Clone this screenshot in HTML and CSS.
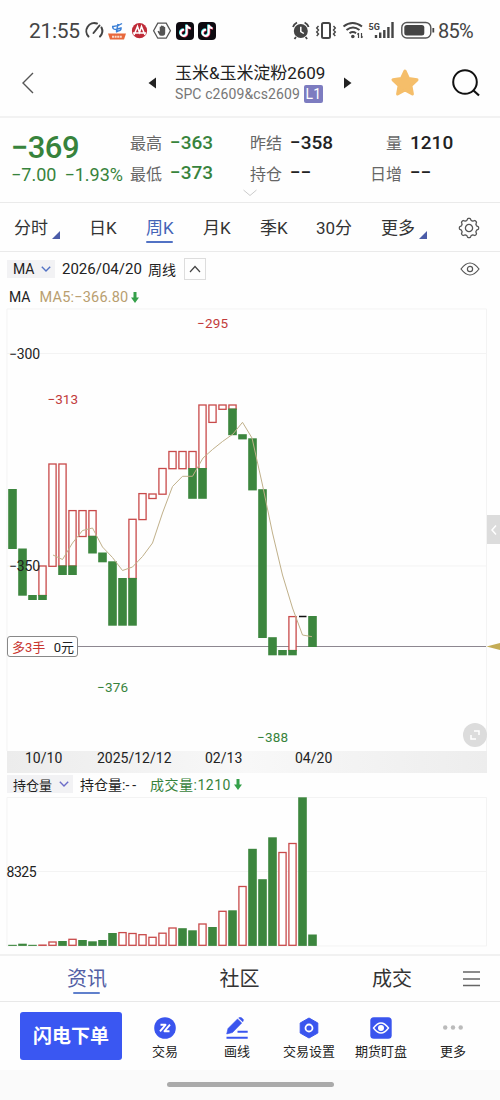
FILE: index.html
```html
<!DOCTYPE html>
<html lang="zh-CN">
  <head>
    <meta charset="utf-8">
    <title>玉米&amp;玉米淀粉2609</title>
    <link rel="stylesheet" href="styles.css">
  </head>
  <body>
    <div class="status-bar">
      <span class="clock">21:55</span>
      <svg class="status-left" width="136" height="22" viewBox="84 20 136 22">
        <g fill="none" stroke="#444" stroke-width="2" stroke-linecap="round">
          <path d="M88.500 36.500a8 8 0 0 1 8.500-13M101.500 27.500a8 8 0 0 1-1.500 9M93.500 33l6-7.500"/>
        </g>
        <path d="M108 33.500h18l-2 6h-14z" fill="#e8683c"/>
        <path d="M112 36.700h10" stroke="#fbd9ca" stroke-width="2" stroke-dasharray="2 .6"/>
        <path d="M112 26.500q5 .5 10-3M113 26q-1 3.500 3 3.500l5-1.500q.5 2.500-3 3l-2 1M118 24l-1.500 8" fill="none" stroke="#3b7fd6" stroke-width="1.500"/>
        <circle cx="139.500" cy="30.700" r="7.600" fill="#bf2b38"/>
        <path d="M134 35l3.500-8.500 2 6 2-6L145 35M133 33h13" fill="none" stroke="#fff" stroke-width="1.500"/>
        <path d="M153.600 30.700l4.200-7.500h8.400l4.200 7.500-4.200 7.500h-8.400z" fill="#fff" stroke="#555" stroke-width="1.300"/>
        <path d="M159.800 35.500l-2.300-4 1-.7 1.200 1v-5q.7-.8 1.300 0v-1q.8-.8 1.400 0v.3q.8-.8 1.400 0v1q.8-.6 1.400.2v6q0 2-2 2.500h-2z" fill="#555"/>
        <rect x="176" y="22" width="18" height="18" rx="4" fill="#0d0a10"/>
        <rect x="198" y="22" width="18" height="18" rx="4" fill="#0d0a10"/>
        <g fill="none" stroke-width="2">
          <g id="note">
            <path d="M184 29.800a3.100 3.100 0 1 0 2.700 3V25q.8 3 3.800 3.200" stroke="#31d5d8" transform="translate(-.6 -.5)"/>
            <path d="M184 29.800a3.100 3.100 0 1 0 2.700 3V25q.8 3 3.800 3.200" stroke="#e8315b" transform="translate(.6 .5)"/>
            <path d="M184 29.800a3.100 3.100 0 1 0 2.700 3V25q.8 3 3.800 3.200" stroke="#fff"/>
          </g>
          <use href="#note" x="22"/>
        </g>
      </svg>
      <svg class="status-right" width="146" height="22" viewBox="290 20 146 22">
        <circle cx="300.800" cy="31" r="7" fill="#444"/>
        <path d="M293 27q1-3 4-4.500M308.600 27q-1-3-4-4.500M296 37l-1.500 2M305.600 37l1.500 2" stroke="#444" stroke-width="1.800" fill="none"/>
        <path d="M300.800 26.800v4.700l3 2" stroke="#fff" stroke-width="1.500" fill="none"/>
        <rect x="322" y="23" width="8" height="15" rx="1.500" fill="none" stroke="#444" stroke-width="2"/>
        <path d="M318.500 26l-1.800 2 1.800 2-1.800 2 1.800 2-1.800 2M333.500 26l1.800 2-1.800 2 1.800 2-1.800 2 1.800 2" fill="none" stroke="#444" stroke-width="1.400"/>
        <path d="M343.500 26.500q9-7 18.500 0M346.500 30q6.500-5 13 0M349.500 33.200q3.300-2.400 6.600 0" fill="none" stroke="#444" stroke-width="2"/>
        <circle cx="352.800" cy="36.500" r="1.800" fill="#444"/>
        <path d="M358.500 38v-5M361.500 33v5M357.300 34.500l1.200-1.500M362.700 36.500l-1.200 1.500" stroke="#444" stroke-width="1.200"/>
        <text x="368.500" y="29.500" class="net">5G</text>
        <path d="M376 38v-3M380.200 38v-5.500M384.300 38v-8M388.400 38v-11M392.500 38V22" stroke="#444" stroke-width="2.400"/>
        <rect x="401.800" y="22.500" width="29" height="15.500" rx="5" fill="none" stroke="#555" stroke-width="1.400"/>
        <rect x="404.300" y="25" width="20" height="10.500" rx="2.500" fill="#444"/>
        <path d="M433.300 28v4.500" stroke="#444" stroke-width="1.800"/>
      </svg>
      <span class="battery">85%</span>
    </div>

    <div class="header">
      <svg class="back" width="14" height="24" viewBox="0 0 14 24"><path d="M12 2L2 12l10 10" fill="none" stroke="#555" stroke-width="1.400"/></svg>
      <svg class="prev" width="8" height="12"><path d="M8 .5v11L.5 6z" fill="#222"/></svg>
      <div class="contract">
        <div class="contract-name">玉米&amp;玉米淀粉2609</div>
        <div class="contract-code">SPC c2609&amp;cs2609<span class="level">L1</span></div>
      </div>
      <svg class="next" width="8" height="12"><path d="M0 .5v11L7.500 6z" fill="#222"/></svg>
      <svg class="star" width="30" height="30" viewBox="0 0 30 30"><path d="M15 3l3.600 7.600 8.400 1.200-6.100 5.800 1.500 8.400-7.400-4-7.400 4 1.500-8.400L3 11.800l8.400-1.200z" fill="#f5be6a" stroke="#f5be6a" stroke-width="3" stroke-linejoin="round"/></svg>
      <svg class="search" width="30" height="30" viewBox="0 0 30 30"><circle cx="14" cy="14" r="11.800" fill="none" stroke="#111" stroke-width="2"/><path d="M22.500 22.500l5.500 5" stroke="#111" stroke-width="2.200"/></svg>
    </div>

    <div class="quote">
      <div class="quote-main">
        <div class="last">−369</div>
        <div class="change"><span>−7.00</span><span>−1.93%</span></div>
      </div>
      <div class="quote-grid">
        <span class="label">最高</span><span class="value down">−363</span>
        <span class="label">昨结</span><span class="value">−358</span>
        <span class="label right">量</span><span class="value">1210</span>
        <span class="label">最低</span><span class="value down">−373</span>
        <span class="label">持仓</span><span class="value">−−</span>
        <span class="label right">日增</span><span class="value">−−</span>
      </div>
      <svg class="expand" width="14" height="8"><path d="M.5 1l6.500 5.500L13.500 1" fill="none" stroke="#ccc"/></svg>
    </div>

    <div class="periods">
      <span class="period has-more">分时</span>
      <span class="period">日K</span>
      <span class="period active">周K</span>
      <span class="period">月K</span>
      <span class="period">季K</span>
      <span class="period">30分</span>
      <span class="period has-more">更多</span>
      <svg class="gear" width="22" height="22" viewBox="-11 -11 22 22"><g fill="none" stroke="#555" stroke-width="1.300" stroke-linejoin="round"><path id="gear-path"/><circle r="3.600"/></g></svg>
    </div>

    <div class="chart-info">
      <span class="picker">MA<svg width="10" height="6"><path d="M.8.8L5 5 9.200.8" fill="none" stroke="#5272c4" stroke-width="1.400"/></svg></span>
      <span class="date">2026/04/20</span>
      <span class="kind">周线</span>
      <span class="fold"><svg width="12" height="8"><path d="M1 7l5-5.500L11 7" fill="none" stroke="#444" stroke-width="1.200"/></svg></span>
      <svg class="eye" width="20" height="14" viewBox="0 0 20 14"><path d="M1 7q9-12 18 0-9 12-18 0z" fill="none" stroke="#555" stroke-width="1.200"/><circle cx="10" cy="7" r="2.600" fill="none" stroke="#555" stroke-width="1.200"/></svg>
    </div>
    <div class="ma-info">
      <span>MA</span>
      <span class="ma-value">MA5:−366.80</span>
      <svg width="8" height="11"><path d="M2.500 0h3v5.500H8L4 11 0 5.500h2.500z" fill="#35a04a"/></svg>
    </div>

    <div class="chart">
      <svg width="500" height="443" viewBox="0 308 500 443">
        <path d="M7 309h479.500V751M7 309v442M7 353.500h479.500M7 566h479.500" class="grid"/>
        <path d="M78 646.500h408" stroke="#8d8790"/>
        <g id="candles"></g>
        <path d="M299 616.500h7.500" stroke="#111" stroke-width="1.500"/>
        <polyline class="ma-line" points="53,555 62.500,559.500 72.500,543 82.500,530.500 92.500,528 102.500,547 112.500,557.500 122.500,570.500 132.500,567 142.500,556.500 152.500,543 162.500,513 172.500,486.500 182.500,476.300 192.500,476.300 203,458 212.500,449.500 222.500,441.500 233,434 242.500,422.300 252,438 262.500,485 272.500,533 282.500,575 292.500,608 302.500,635 312,636.700"/>
        <text x="9" y="358.500" textLength="31">−300</text>
        <text x="9" y="571" textLength="31">−350</text>
        <text x="47.500" y="404" class="high" textLength="30.500">−313</text>
        <text x="197" y="328" class="high" textLength="31">−295</text>
        <text x="97" y="692" class="low" textLength="31">−376</text>
        <text x="257" y="742" class="low" textLength="31">−388</text>
        <path d="M486.500 646.500L500 643v7z" fill="#c4ac55"/>
      </svg>
      <div class="position"><span class="long">多3手</span><span>0元</span></div>
      <div class="side-tab"><svg width="6" height="12"><path d="M5 1.500L1 6l4 4.500" fill="none" stroke="#fff" stroke-width="1.500"/></svg></div>
      <div class="zoom-button"><svg width="10" height="10"><path d="M4 1h5v4M1 5v4h5" fill="none" stroke="#fff" stroke-width="1.500"/></svg></div>
    </div>

    <div class="axis">
      <span>10/10</span>
      <span>2025/12/12</span>
      <span>02/13</span>
      <span>04/20</span>
    </div>

    <div class="volume-info">
      <span class="picker">持仓量<svg width="10" height="6"><path d="M.8.8L5 5 9.200.8" fill="none" stroke="#6c6cc8" stroke-width="1.400"/></svg></span>
      <span class="open-interest">持仓量:<span class="dashes">--</span></span>
      <span class="volume down">成交量:1210</span>
      <svg width="8" height="11"><path d="M2.500 0h3v5.500H8L4 11 0 5.500h2.500z" fill="#35a04a"/></svg>
    </div>
    <svg class="volume-chart" width="500" height="157" viewBox="0 797 500 157">
      <path d="M7 797.500h479.500v148.500H7zM7 871.500h479.500" class="grid"/>
      <g id="volumes"></g>
      <text x="6.500" y="877" textLength="30">8325</text>
    </svg>

    <div class="news-tabs">
      <span class="news-tab active">资讯</span>
      <span class="news-tab">社区</span>
      <span class="news-tab">成交</span>
      <svg class="menu" width="17" height="16"><path d="M0 1h17M0 8h17M0 14.500h17" stroke="#666" stroke-width="1.300"/></svg>
    </div>

    <div class="toolbar">
      <button class="order-button">闪电下单</button>
      <div class="tool">
        <svg width="22" height="22" viewBox="0 0 22 22"><circle cx="11" cy="11" r="10.800" fill="#3a55ee"/><path d="M6.500 7.800h5L6 14.300M16 7.700l-5.500 6.500h5" fill="none" stroke="#fff" stroke-width="1.900" stroke-linejoin="round"/></svg>
        <span>交易</span>
      </div>
      <div class="tool">
        <svg width="22" height="22" viewBox="0 0 22 22"><path d="M.7 17l1.300-5.500L11.500 2l4.200 4L6.500 15.500zM12.700 1l1.500-.8q1.500 0 3.300 2.600l-.7 2z" fill="#3a55ee" stroke="#3a55ee" stroke-width=".6" stroke-linejoin="round"/><path d="M11.500 14.700h10.200M.5 20.700h21.200" stroke="#3a55ee" stroke-width="2"/></svg>
        <span>画线</span>
      </div>
      <div class="tool">
        <svg width="22" height="22" viewBox="0 0 22 22"><path d="M11 1l8.800 5v10L11 21l-8.800-5V6z" fill="#3a55ee" stroke="#3a55ee" stroke-linejoin="round"/><circle cx="11" cy="11" r="3.500" fill="none" stroke="#fff" stroke-width="1.800"/></svg>
        <span>交易设置</span>
      </div>
      <div class="tool">
        <svg width="22" height="22" viewBox="0 0 22 22"><rect x=".3" y=".3" width="21.400" height="21.400" rx="3.500" fill="#3a55ee"/><path d="M3.500 11q7.500-10 15 0-7.500 10-15 0z" fill="none" stroke="#fff" stroke-width="1.400"/><circle cx="11" cy="11" r="3" fill="#fff"/></svg>
        <span>期货盯盘</span>
      </div>
      <div class="tool">
        <svg width="22" height="22" viewBox="0 0 22 22"><g fill="#bbb"><circle cx="3.200" cy="10.500" r="2.200"/><circle cx="11" cy="10.500" r="2.200"/><circle cx="18.700" cy="10.500" r="2.200"/></g></svg>
        <span>更多</span>
      </div>
    </div>

    <div class="home-area"><div class="home-bar"></div></div>

    <script>
      // [column, kind, top, bottom]
      const candles = [
        [0, 'g', 489, 549], [1, 'g', 548.5, 595.7], [2, 'g', 595, 600],
        [3, 'r', 566, 595.5], [3, 'g', 595, 600], [4, 'r', 464, 566.3],
        [5, 'r', 464, 566], [5, 'g', 565.5, 575], [6, 'r', 510.6, 566],
        [6, 'g', 565.5, 575], [7, 'r', 510.6, 536.5], [8, 'r', 510.6, 536.5],
        [8, 'g', 535.8, 553.5], [9, 'g', 552.5, 562.3], [10, 'g', 561.3, 625.7],
        [11, 'g', 578, 625.7], [12, 'r', 519.3, 578.5], [12, 'g', 578, 625.7],
        [13, 'r', 493.6, 519.6], [14, 'r', 494, 498.5], [15, 'r', 468.5, 494.2],
        [16, 'r', 451.5, 468.7], [17, 'r', 451.5, 468.7], [18, 'r', 451.5, 468.7],
        [18, 'g', 468, 498.8], [19, 'r', 405, 468.7], [19, 'g', 468, 498.8],
        [20, 'r', 405, 422.4], [21, 'r', 405, 409.3], [22, 'r', 405, 409.3],
        [22, 'g', 408.5, 435.2], [23, 'g', 434.2, 439.4], [24, 'g', 438.3, 490.4],
        [25, 'g', 489.2, 638], [26, 'g', 637.2, 655.3], [27, 'g', 650, 655.3],
        [28, 'r', 616.6, 650.5], [28, 'g', 650, 655.3], [30, 'g', 616, 647]
      ];

      const volumes = [
        ['g', 944.8], ['g', 943.7], ['g', 944.8], ['r', 945.1], ['r', 942],
        ['g', 941], ['r', 939.3], ['g', 940], ['g', 941.3], ['g', 940],
        ['g', 933], ['r', 932.6], ['r', 933.5], ['r', 934.7], ['r', 937.3],
        ['r', 933.2], ['r', 928], ['g', 928.2], ['g', 930.3], ['r', 924],
        ['g', 927], ['r', 911.3], ['g', 910.3], ['r', 886.5], ['g', 848.8],
        ['g', 879.2], ['g', 837.3], ['r', 852.5], ['r', 843.5], ['g', 797.3],
        ['g', 934.5]
      ];

      function bar(column, kind, top, bottom) {
        const x = 8.2 + column * 10;
        if (kind === 'g') {
          return `<rect x="${x}" y="${top}" width="8.600" height="${bottom - top}" class="fall"/>`;
        }
        return `<rect x="${x + 0.7}" y="${top}" width="7.200" height="${bottom - top}" class="rise"/>`;
      }

      document.querySelector('#candles').innerHTML = candles
        .map((candle) => bar(...candle)).join('');

      document.querySelector('#volumes').innerHTML = volumes
        .map(([kind, top], i) => bar(i, kind, top, kind === 'g' ? 945.9 : 945.3)).join('');

      // Eight soft teeth around the settings wheel
      let gear = '';
      for (let i = 0; i < 96; i++) {
        const angle = i / 96 * Math.PI * 2;
        const radius = 8.7 + Math.max(-0.9, Math.min(0.9, 1.5 * Math.cos(angle * 8)));
        gear += `${i ? 'L' : 'M'}${(radius * Math.cos(angle)).toFixed(2)} ${(radius * Math.sin(angle)).toFixed(2)}`;
      }
      document.querySelector('#gear-path').setAttribute('d', gear + 'z');
    </script>
  </body>
</html>
```
FILE: styles.css
```css
* {
  box-sizing: border-box;
}
body {
  margin: 0;
  width: 500px;
  height: 1100px;
  overflow: hidden;
  background-color: #fefefe;
  color: #222;
  font-family: Roboto, "Noto Sans CJK SC", sans-serif;
  white-space: nowrap;
}
svg {
  display: block;
  flex-shrink: 0;
}
.status-bar {
  display: flex;
  align-items: center;
  height: 50px;
  padding: 12px 0 0 29px;
  color: #444;
}
.clock {
  width: 55px;
  font-size: 21px;
  letter-spacing: -0.3px;
}
.status-right {
  margin-left: 70px;
}
.net {
  font-size: 9px;
  font-weight: bold;
  fill: #444;
}
.battery {
  margin-left: 2px;
  font-size: 20px;
  letter-spacing: -0.8px;
}
.header {
  display: flex;
  align-items: center;
  height: 68px;
  padding-left: 21px;
  border-bottom: 2px solid #f2f2f2;
}
.prev {
  margin-left: 113px;
}
.contract {
  width: 152px;
  margin-left: 19px;
}
.contract-name {
  font-size: 17px;
  line-height: 22px;
  letter-spacing: -0.05px;
}
.contract-code {
  display: flex;
  align-items: center;
  height: 20px;
  font-size: 14px;
  letter-spacing: 0.1px;
  color: #777;
}
.level {
  width: 19px;
  margin-left: 4px;
  border-radius: 2px;
  background-color: #7d7cc0;
  color: white;
  line-height: 18px;
  text-align: center;
}
.next {
  margin-left: 17px;
}
.star {
  margin-left: 38px;
}
.search {
  margin-left: 31px;
}
.quote {
  position: relative;
  display: flex;
  height: 85px;
  padding-top: 9px;
  border-bottom: 1px solid #eaeaea;
}
.quote-main {
  width: 130px;
  padding: 1px 0 0 11px;
  color: #37833c;
}
.last {
  height: 37px;
  font-size: 31px;
  font-weight: 500;
  line-height: 39px;
  letter-spacing: -0.6px;
}
.change {
  display: flex;
  gap: 8px;
  font-size: 18px;
  line-height: 20px;
}
.quote-grid {
  display: grid;
  grid-template-columns: 40px 80px 40px 80px 32px 60px;
  grid-template-rows: 30px 31px;
  align-items: center;
}
.label {
  font-size: 16px;
  color: #666;
}
.right {
  justify-self: end;
}
.right + .value {
  padding-left: 8px;
}
.value {
  font-size: 19px;
  font-weight: 500;
}
.down {
  color: #37833c;
}
.expand {
  position: absolute;
  left: 243px;
  top: 71px;
}
.periods {
  display: flex;
  align-items: center;
  height: 49px;
  padding: 1px 0 0 14px;
  border-bottom: 1px solid #eaeaea;
  font-size: 17px;
  color: #333;
}
.period {
  position: relative;
  width: 57px;
  line-height: 30px;
}
.period:first-child {
  width: 75px;
}
.period:nth-child(5) {
  width: 56px;
}
.period:nth-child(6) {
  width: 65px;
}
.period.active {
  color: #4463b6;
}
.period.active::after {
  content: "";
  position: absolute;
  left: 0;
  bottom: 0;
  width: 27px;
  height: 2px;
  border-radius: 1px;
  background-color: #5272c4;
}
.has-more::after {
  content: "";
  position: absolute;
  left: 38px;
  bottom: 4px;
  border-left: 8px solid transparent;
  border-bottom: 8px solid #4b5ca8;
}
.gear {
  margin-left: 20px;
}
.chart-info {
  display: flex;
  align-items: center;
  height: 34px;
  padding-left: 7px;
  font-size: 15px;
}
.picker {
  display: flex;
  align-items: center;
  justify-content: space-between;
  width: 48px;
  height: 18px;
  padding: 0 4px 0 6px;
  background-color: #f2f2f4;
  font-size: 14px;
}
.date {
  width: 86px;
  margin-left: 7px;
}
.kind {
  width: 36px;
  font-size: 14px;
}
.fold {
  display: flex;
  align-items: center;
  justify-content: center;
  width: 22px;
  height: 22px;
  border: 1px solid #ddd;
}
.eye {
  margin-left: 254px;
}
.ma-info {
  display: flex;
  align-items: center;
  height: 22px;
  padding-left: 9px;
  font-size: 14px;
}
.ma-value {
  margin: 0 3px 0 9px;
  font-size: 14.5px;
  letter-spacing: 0.2px;
  color: #b99e70;
}
.chart {
  position: relative;
  height: 443px;
}
.chart text,
.volume-chart text {
  font-size: 14px;
  fill: #222;
}
.chart .high {
  font-size: 13.5px;
  fill: #c23b3b;
}
.chart .low {
  font-size: 13.5px;
  fill: #37833c;
}
.grid {
  fill: none;
  stroke: #f3f3f3;
}
.fall {
  fill: #3c863e;
}
.rise {
  fill: white;
  stroke: #c84a4a;
  stroke-width: 1.3;
}
.ma-line {
  fill: none;
  stroke: #c0b08a;
}
.position {
  position: absolute;
  left: 7px;
  top: 328px;
  display: flex;
  align-items: center;
  justify-content: space-between;
  width: 71px;
  height: 21px;
  padding: 0 3px 1px 4px;
  border: 1px solid #888;
  border-radius: 3px;
  background-color: white;
  font-size: 13px;
}
.long {
  color: #c8352f;
}
.side-tab {
  position: absolute;
  left: 487px;
  top: 207px;
  display: flex;
  align-items: center;
  width: 13px;
  height: 29px;
  padding-left: 4px;
  background-color: #dcdcdc;
}
.zoom-button {
  position: absolute;
  left: 463px;
  top: 415px;
  display: flex;
  align-items: center;
  justify-content: center;
  width: 24px;
  height: 24px;
  border-radius: 12px;
  background-color: #dcdcdc;
}
.axis {
  display: grid;
  grid-template-columns: 72px 108px 90px 80px;
  width: 480px;
  height: 22px;
  margin-left: 7px;
  padding-left: 18px;
  background: linear-gradient(to right, #ececec, #f8f8f8 50%, #ededed);
  font-size: 14px;
  line-height: 15px;
}
.volume-info {
  display: flex;
  align-items: center;
  height: 24px;
  padding: 0 0 2px 7px;
  font-size: 14px;
}
.volume-info .picker {
  width: 66px;
  font-size: 13px;
}
.open-interest {
  width: 63px;
  margin-left: 7px;
}
.dashes {
  letter-spacing: 3px;
}
.volume {
  margin: 0 3px 0 7px;
  letter-spacing: 0.5px;
}
.news-tabs {
  display: flex;
  align-items: center;
  height: 48px;
  padding-left: 67px;
  border-top: 2px solid #f1f1f1;
  border-bottom: 1px solid #e8e8e8;
  font-size: 20px;
  color: #333;
}
.news-tab {
  position: relative;
  width: 152.5px;
  line-height: 34px;
}
.news-tab:nth-child(3) {
  width: 91px;
}
.news-tab.active {
  color: #5360a5;
}
.news-tab.active::after {
  content: "";
  position: absolute;
  left: 6px;
  bottom: 2px;
  width: 27px;
  height: 2px;
  border-radius: 1px;
  background-color: #6080cc;
}
.toolbar {
  display: flex;
  align-items: center;
  height: 68px;
  padding-left: 20px;
}
.order-button {
  width: 102px;
  height: 48px;
  margin-right: 7px;
  padding: 0 0 3px;
  border: none;
  border-radius: 3px;
  background-color: #3a57f2;
  color: white;
  font-family: inherit;
  font-size: 19px;
  font-weight: bold;
}
.tool {
  display: flex;
  flex-direction: column;
  align-items: center;
  gap: 3px;
  width: 72px;
  padding-top: 5px;
  font-size: 13px;
  line-height: 19px;
}
.home-area {
  display: flex;
  justify-content: center;
  height: 30px;
  padding-top: 12px;
  background-color: #fafafa;
}
.home-bar {
  width: 167px;
  height: 5px;
  border-radius: 3px;
  background-color: #aaa;
}
```
